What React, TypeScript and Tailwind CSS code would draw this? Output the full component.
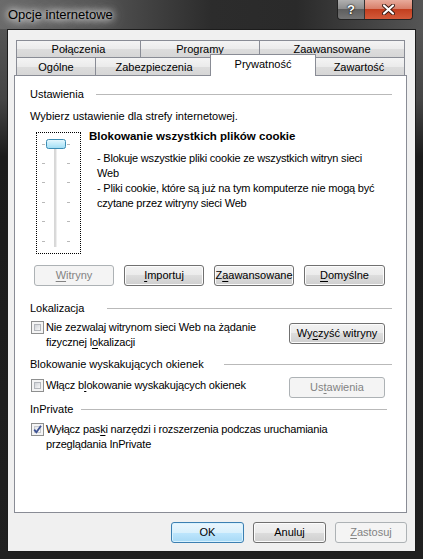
import React from 'react';

const btn =
  'h-[21px] rounded-[3px] border border-[#707070] bg-[linear-gradient(#f2f2f2_0%,#ebebeb_50%,#dddddd_50%,#cfcfcf_100%)] shadow-[inset_0_0_0_1px_#fcfcfc] text-black flex items-center justify-center shrink-0';
const btnOff =
  'h-[21px] rounded-[3px] border border-[#adb2b5] bg-[#f4f4f4] text-[#838383] flex items-center justify-center shrink-0';
const btnDefault =
  'h-[21px] rounded-[3px] border border-[#3c7fb1] bg-[linear-gradient(#eaf6fd_0%,#d9f0fc_50%,#bee6fd_50%,#a7d9f5_100%)] shadow-[inset_0_0_0_1px_#d8f2ff] text-black flex items-center justify-center shrink-0';

function U({ children }: { children: React.ReactNode }) {
  return <span className="underline underline-offset-[2px]">{children}</span>;
}

function Checkbox({ checked }: { checked?: boolean }) {
  return (
    <div className="relative w-[13px] h-[13px] shrink-0 border border-[#8e8f8f] bg-[#f4f4f4] p-[2px]">
      <div
        className={
          checked
            ? 'w-full h-full border border-[#c6c9ce] bg-[linear-gradient(135deg,#e4e6e9,#fbfbfb)]'
            : 'w-full h-full border border-[#b3b6bb] bg-[linear-gradient(135deg,#cfd2d7,#f7f7f7)]'
        }
      />
      {checked && (
        <svg className="absolute left-0 top-0" width="11" height="11" viewBox="0 0 11 11">
          <path d="M2.2 5.6 L4.4 8.2 L9 1.8" fill="none" stroke="#3d5294" strokeWidth="1.8" />
        </svg>
      )}
    </div>
  );
}

function Header({ label, w, lineClass }: { label: string; w: string; lineClass?: string }) {
  return (
    <div className="flex items-center h-[15px]">
      <span className={w + ' shrink-0 whitespace-nowrap'}>{label}</span>
      <div className={'flex-1 h-px bg-[#b9b9b9] ' + (lineClass ?? '')} />
    </div>
  );
}

function Slider() {
  const ticks = [11, 30, 49, 69, 88, 108];
  return (
    <div className="w-[45px] h-[122px] shrink-0 border border-dotted border-black mt-[3px] ml-[6px]">
      <svg width="43" height="120" viewBox="0 0 43 120">
        <defs>
          <linearGradient id="thumb" x1="0" y1="0" x2="0" y2="1">
            <stop offset="0" stopColor="#e9f8fe" />
            <stop offset="0.5" stopColor="#c3ecfb" />
            <stop offset="1" stopColor="#9fdcf3" />
          </linearGradient>
        </defs>
        <rect x="17.5" y="12" width="1" height="102" fill="#b0b0b0" />
        <rect x="18.5" y="12" width="1" height="102" fill="#dedede" />
        {ticks.map((y) => (
          <g key={y}>
            <rect x="5" y={y} width="3" height="1" fill="#b9b9b9" />
            <rect x="30" y={y} width="3" height="1" fill="#b9b9b9" />
          </g>
        ))}
        <rect x="9.5" y="6.5" width="19" height="9" rx="2" fill="url(#thumb)" stroke="#3a8cb4" />
      </svg>
    </div>
  );
}

export default function App() {
  return (
    <div className="w-[423px] h-[559px] flex flex-col overflow-hidden bg-[linear-gradient(180deg,#5c5c5c_0%,#444_18%,#1b1b1b_28%,#202020_100%)] font-['Liberation_Sans',Arial,sans-serif] text-[11px] leading-[15px] text-black">
      {/* title bar */}
      <div className="h-[29px] shrink-0 flex items-start bg-[linear-gradient(90deg,#6a6a6a_0%,#555_22%,#2c2c2c_50%,#2a2a2a_70%,#555_100%)]">
        <div className="ml-[8px] mt-[7px] text-[13px] leading-[16px] text-black [text-shadow:0_0_6px_#fff,0_0_10px_#eee,0_0_16px_#ccc]">
          Opcje internetowe
        </div>
        <div className="flex-1" />
        <div className="flex mr-[10px] h-[20px] border border-t-0 border-[#222] rounded-b-[4px] overflow-hidden">
          <div className="w-[27px] h-full flex items-center justify-center border-r border-[#333] bg-[linear-gradient(#b0b0b0_0%,#8e8e8e_45%,#5e5e5e_50%,#747474_100%)] text-white font-bold text-[13px] [text-shadow:0_0_2px_#000,0_0_1px_#000]">
            ?
          </div>
          <div className="w-[47px] h-full flex items-center justify-center bg-[linear-gradient(#e8ab9b_0%,#d8806b_45%,#c33f1f_50%,#d35a3a_100%)]">
            <svg width="13" height="11" viewBox="0 0 13 11">
              <path d="M2 1.5 L11 9.5 M11 1.5 L2 9.5" stroke="#3a1a12" strokeWidth="4" strokeLinecap="round" />
              <path d="M2 1.5 L11 9.5 M11 1.5 L2 9.5" stroke="#fff" strokeWidth="2.2" strokeLinecap="round" />
            </svg>
          </div>
        </div>
      </div>

      {/* client area */}
      <div className="ml-[7px] w-[409px] h-[523px] shrink-0 bg-[#f0f0f0] border border-[#1c1c1c] pt-[10px] pl-[6px]">
        {/* tabs */}
        <div className="ml-[2px] w-[389px]">
          <div className="flex h-[17px]">
            <div className="w-[124px] border-t border-l border-[#898c95] bg-[linear-gradient(#f4f4f4_0%,#ebebeb_50%,#dddddd_51%,#d6d6d6_100%)] flex items-center justify-center">
              Połączenia
            </div>
            <div className="w-[119px] border-t border-l border-[#898c95] bg-[linear-gradient(#f4f4f4_0%,#ebebeb_50%,#dddddd_51%,#d6d6d6_100%)] flex items-center justify-center">
              Programy
            </div>
            <div className="w-[146px] border-t border-l border-r border-[#898c95] bg-[linear-gradient(#f4f4f4_0%,#ebebeb_50%,#dddddd_51%,#d6d6d6_100%)] flex items-center justify-center">
              Zaawansowane
            </div>
          </div>
          <div className="flex items-start h-[18px]">
            <div className="w-[79px] h-[18px] border-t border-l border-[#898c95] bg-[linear-gradient(#f4f4f4_0%,#ebebeb_50%,#dddddd_51%,#d6d6d6_100%)] flex items-center justify-center pt-[1px]">
              Ogólne
            </div>
            <div className="w-[117px] h-[18px] border-t border-l border-[#898c95] bg-[linear-gradient(#f4f4f4_0%,#ebebeb_50%,#dddddd_51%,#d6d6d6_100%)] flex items-center justify-center pt-[1px]">
              Zabezpieczenia
            </div>
            <div className="relative z-10 w-[106px] h-[22px] -mt-[3px] -mx-[2px] border-t border-l border-r border-[#898c95] bg-white flex justify-center pt-[2px]">
              Prywatność
            </div>
            <div className="w-[91px] h-[18px] border-t border-r border-[#898c95] bg-[linear-gradient(#f4f4f4_0%,#ebebeb_50%,#dddddd_51%,#d6d6d6_100%)] flex items-center justify-center pt-[1px]">
              Zawartość
            </div>
          </div>
        </div>

        {/* tab panel */}
        <div className="w-[393px] h-[438px] border border-[#898c95] bg-white pt-[11px] pl-[15px] pr-[14px]">
          <Header label="Ustawienia" w="w-[66px]" />
          <div className="mt-[7px]">Wybierz ustawienie dla strefy internetowej.</div>

          <div className="mt-[5px] flex items-start">
            <Slider />
            <div className="ml-[8px]">
              <div className="font-bold text-[11.5px]">Blokowanie wszystkich plików cookie</div>
              <div className="mt-[7px] ml-[8px] whitespace-nowrap tracking-[-0.2px]">
                <div>- Blokuje wszystkie pliki cookie ze wszystkich witryn sieci</div>
                <div>Web</div>
                <div>- Pliki cookie, które są już na tym komputerze nie mogą być</div>
                <div>czytane przez witryny sieci Web</div>
              </div>
            </div>
          </div>

          <div className="mt-[11px] ml-[4px] flex gap-[10px]">
            <div className={btnOff + ' w-[80px]'}>
              <span><U>W</U>itryny</span>
            </div>
            <div className={btn + ' w-[80px]'}>
              <span><U>I</U>mportuj</span>
            </div>
            <div className={btn + ' w-[80px]'}>
              <span>Z<U>a</U>awansowane</span>
            </div>
            <div className={btn + ' w-[81px]'}>
              <span><U>D</U>omyślne</span>
            </div>
          </div>

          <div className="mt-[15px]">
            <Header label="Lokalizacja" w="w-[77px]" />
          </div>
          <div className="mt-[4px] flex items-start">
            <div className="ml-[1px] mt-[1px]">
              <Checkbox />
            </div>
            <div className="ml-[2px] flex-1 tracking-[-0.15px]">
              <div>Nie zezwalaj witrynom sieci Web na żądanie</div>
              <div>fizycznej l<U>o</U>kalizacji</div>
            </div>
            <div className={btn + ' w-[96px] mt-[3px] mr-[7px]'}>
              <span>Wy<U>c</U>zyść witryny</span>
            </div>
          </div>

          <div className="mt-[7px]">
            <Header label="Blokowanie wyskakujących okienek" w="w-[194px]" />
          </div>
          <div className="mt-[5px] flex items-start">
            <div className="ml-[1px] mt-[2px]">
              <Checkbox />
            </div>
            <div className="ml-[2px] mt-[1px] flex-1 tracking-[-0.15px]">
              Włącz b<U>l</U>okowanie wyskakujących okienek
            </div>
            <div className={btnOff + ' w-[96px] mr-[7px]'}>
              <span>Us<U>t</U>awienia</span>
            </div>
          </div>

          <div className="mt-[4px]">
            <Header label="InPrivate" w="w-[51px]" lineClass="mr-[5px]" />
          </div>
          <div className="mt-[5px] flex items-start">
            <div className="ml-[1px] mt-[1px]">
              <Checkbox checked />
            </div>
            <div className="ml-[2px] tracking-[-0.2px]">
              <div>Wyłącz pas<U>k</U>i narzędzi i rozszerzenia podczas uruchamiania</div>
              <div>przeglądania InPrivate</div>
            </div>
          </div>
        </div>

        {/* dialog buttons */}
        <div className="w-[393px] mt-[9px] flex justify-end gap-[9px]">
          <div className={btnDefault + ' w-[73px]'}>OK</div>
          <div className={btn + ' w-[73px]'}>Anuluj</div>
          <div className={btnOff + ' w-[72px]'}>
            <span><U>Z</U>astosuj</span>
          </div>
        </div>
      </div>
    </div>
  );
}
